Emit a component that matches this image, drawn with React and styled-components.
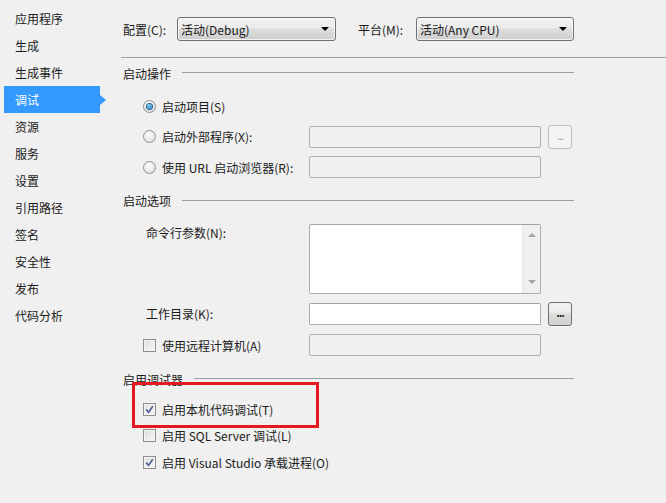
import styled, { createGlobalStyle } from "styled-components";

const GlobalStyle = createGlobalStyle`
  html, body {
    margin: 0;
    padding: 0;
    background: #f0f0f0;
  }
  body {
    font-family: "Noto Sans CJK SC", "Noto Sans", sans-serif;
    font-size: 12px;
    color: #1a1a1a;
  }
`;

const Page = styled.div`
  display: flex;
  width: 666px;
  height: 503px;
  overflow: hidden;
  background: #f0f0f0;
`;

const Sidebar = styled.ul`
  list-style: none;
  margin: 0;
  padding: 5px 0 0 0;
  width: 110px;
  flex-shrink: 0;
`;

const NavItem = styled.li`
  position: relative;
  height: 27px;
  line-height: 27px;
  margin-left: 4px;
  width: 96px;
  padding-left: 11px;
  box-sizing: border-box;
  background: ${(p) => (p.$active ? "#3399ff" : "transparent")};
  color: ${(p) => (p.$active ? "#fff" : "#1a1a1a")};

  &::after {
    content: "";
    display: ${(p) => (p.$active ? "block" : "none")};
    position: absolute;
    right: -6px;
    top: 9px;
    border-left: 6px solid #3399ff;
    border-top: 5px solid transparent;
    border-bottom: 5px solid transparent;
  }
`;

const Main = styled.div`
  flex: 1;
  padding-left: 11px;
`;

const TopBar = styled.div`
  display: flex;
  align-items: center;
  height: 24px;
  margin-top: 17px;
  padding-left: 2px;
`;

const Label = styled.span`
  white-space: nowrap;
  width: ${(p) => p.$w || "auto"};
  padding-left: ${(p) => p.$indent || "0"};
  flex-shrink: 0;
`;

const Select = styled.div`
  display: flex;
  align-items: center;
  justify-content: space-between;
  box-sizing: border-box;
  width: ${(p) => p.$w};
  height: 24px;
  padding: 0 6px 0 3px;
  margin-right: ${(p) => p.$mr || "0"};
  border: 1px solid #707070;
  border-radius: 3px;
  background: linear-gradient(#f2f2f2 0%, #ebebeb 45%, #dddddd 50%, #cfcfcf 100%);
  box-shadow: inset 0 0 0 1px rgba(255, 255, 255, 0.7);
`;

const Caret = styled.span`
  width: 0;
  height: 0;
  border-left: 4px solid transparent;
  border-right: 4px solid transparent;
  border-top: 4px solid #000;
`;

const Divider = styled.div`
  height: 1px;
  background: #a0a0a0;
  margin-top: 16px;
`;

const Section = styled.div`
  width: 453px;
  margin-top: ${(p) => p.$mt};
`;

const Header = styled.div`
  display: flex;
  align-items: center;
  gap: 11px;
  height: 16px;
  padding-left: 2px;
  white-space: nowrap;

  &::after {
    content: "";
    flex: 1;
    height: 1px;
    background: #a0a0a0;
    margin-top: -1px;
  }
`;

const Rows = styled.div`
  display: flex;
  flex-direction: column;
  gap: ${(p) => p.$gap || "8px"};
  margin-top: ${(p) => p.$mt};
  padding-left: 22px;
`;

const Row = styled.div`
  position: relative;
  display: flex;
  align-items: ${(p) => (p.$top ? "flex-start" : "center")};
  height: ${(p) => p.$h || "24px"};
`;

const Radio = styled.span`
  width: 13px;
  height: 13px;
  box-sizing: border-box;
  border-radius: 50%;
  border: 1px solid #8e8f8f;
  background: radial-gradient(circle at 40% 35%, #fdfdfd, #d8d8d8);
  display: flex;
  align-items: center;
  justify-content: center;
  margin-right: 6px;
  flex-shrink: 0;

  &::after {
    content: "";
    display: ${(p) => (p.$on ? "block" : "none")};
    width: 5px;
    height: 5px;
    border-radius: 50%;
    background: radial-gradient(circle at 40% 35%, #7fd3ff, #1c6fb3);
    box-shadow: 0 0 0 1px #2c5f8a;
  }
`;

const Box = styled.span`
  width: 13px;
  height: 13px;
  box-sizing: border-box;
  border: 1px solid #8e8f8f;
  background: linear-gradient(135deg, #dcdcdc, #fafafa);
  box-shadow: inset 0 0 0 1px #f4f4f4;
  display: flex;
  align-items: center;
  justify-content: center;
  margin-right: 6px;
  flex-shrink: 0;
`;

const Field = styled.div`
  box-sizing: border-box;
  width: 232px;
  height: ${(p) => p.$h || "22px"};
  margin-left: auto;
  margin-right: 33px;
  border: 1px solid ${(p) => (p.$off ? "#afafaf" : "#abadb3")};
  border-top-color: ${(p) => (p.$off ? "#afafaf" : "#a0a3aa")};
  border-radius: 2px;
  background: ${(p) => (p.$off ? "#f0f0f0" : "#fff")};
  display: flex;
  justify-content: flex-end;
`;

const FieldWithButton = styled.div`
  display: flex;
  align-items: center;
  gap: 7px;
  margin-left: auto;
  margin-right: 2px;

  ${Field} {
    margin: 0;
  }
`;

const DotsButton = styled.div`
  box-sizing: border-box;
  width: 24px;
  height: 24px;
  border-radius: 3px;
  border: 1px solid ${(p) => (p.$off ? "#bcbcbc" : "#707070")};
  background: ${(p) =>
    p.$off
      ? "#f4f4f4"
      : "linear-gradient(#f2f2f2 0%, #ebebeb 45%, #dddddd 50%, #cfcfcf 100%)"};
  color: ${(p) => (p.$off ? "#a0a0a0" : "#1a1a1a")};
  font-size: 11px;
  font-weight: ${(p) => (p.$off ? "normal" : "bold")};
  line-height: 19px;
  text-align: center;
  letter-spacing: -1px;
`;

const ScrollBar = styled.div`
  width: 17px;
  background: #f0f0f0;
  border-left: 1px solid #e8e8e8;
  display: flex;
  flex-direction: column;
  justify-content: space-between;
  align-items: center;
  padding: 8px 0 9px;
`;

const Arrow = styled.span`
  width: 0;
  height: 0;
  border-left: 4px solid transparent;
  border-right: 4px solid transparent;
  border-${(p) => (p.$down ? "top" : "bottom")}: 4px solid #a6a6a6;
`;

const Callout = styled.div`
  position: absolute;
  left: -11px;
  top: -17px;
  width: 187px;
  height: 46px;
  box-sizing: border-box;
  border: 3px solid #e3191f;
  pointer-events: none;
`;

const nav = [
  "应用程序",
  "生成",
  "生成事件",
  "调试",
  "资源",
  "服务",
  "设置",
  "引用路径",
  "签名",
  "安全性",
  "发布",
  "代码分析",
];

const Check = () => (
  <svg width="9" height="9" viewBox="0 0 9 9">
    <path d="M1.2 4.6 L3.6 7.2 L7.8 1.2" fill="none" stroke="#4a5c94" strokeWidth="1.6" />
  </svg>
);

const CheckBox = ({ on }) => <Box>{on && <Check />}</Box>;

export default function App() {
  return (
    <Page>
      <GlobalStyle />
      <Sidebar>
        {nav.map((n) => (
          <NavItem key={n} $active={n === "调试"}>
            {n}
          </NavItem>
        ))}
      </Sidebar>
      <Main>
        <TopBar>
          <Label $w="54px">配置(C):</Label>
          <Select $w="159px" $mr="22px">
            活动(Debug)
            <Caret />
          </Select>
          <Label $w="58px">平台(M):</Label>
          <Select $w="158px">
            活动(Any CPU)
            <Caret />
          </Select>
        </TopBar>
        <Divider />

        <Section $mt="7px">
          <Header>启动操作</Header>
          <Rows $mt="13px" $gap="6.5px">
            <Row>
              <Radio $on />
              启动项目(S)
            </Row>
            <Row>
              <Radio />
              启动外部程序(X):
              <FieldWithButton>
                <Field $off />
                <DotsButton $off>...</DotsButton>
              </FieldWithButton>
            </Row>
            <Row>
              <Radio />
              使用 URL 启动浏览器(R):
              <Field $off />
            </Row>
          </Rows>
        </Section>

        <Section $mt="13.5px">
          <Header>启动选项</Header>
          <Rows $mt="15.5px" $gap="7.5px">
            <Row $top $h="70px">
              <Label $indent="3px">命令行参数(N):</Label>
              <Field $h="70px">
                <ScrollBar>
                  <Arrow />
                  <Arrow $down />
                </ScrollBar>
              </Field>
            </Row>
            <Row>
              <Label $indent="3px">工作目录(K):</Label>
              <FieldWithButton>
                <Field />
                <DotsButton>...</DotsButton>
              </FieldWithButton>
            </Row>
            <Row>
              <CheckBox />
              使用远程计算机(A)
              <Field $off />
            </Row>
          </Rows>
        </Section>

        <Section $mt="14px">
          <Header>启用调试器</Header>
          <Rows $mt="12px" $gap="6.5px">
            <Row $h="20px">
              <CheckBox on />
              启用本机代码调试(T)
              <Callout />
            </Row>
            <Row $h="20px">
              <CheckBox />
              启用 SQL Server 调试(L)
            </Row>
            <Row $h="20px">
              <CheckBox on />
              启用 Visual Studio 承载进程(O)
            </Row>
          </Rows>
        </Section>
      </Main>
    </Page>
  );
}
